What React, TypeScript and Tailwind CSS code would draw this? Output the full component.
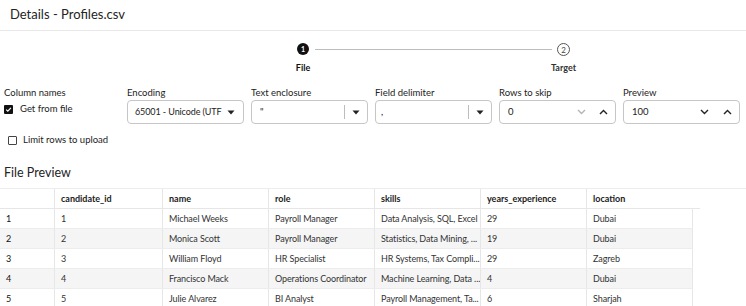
import React from "react";

const rows = [
  ["1", "1", "Michael Weeks", "Payroll Manager", "Data Analysis, SQL, Excel", "29", "Dubai"],
  ["2", "2", "Monica Scott", "Payroll Manager", "Statistics, Data Mining, ...", "19", "Dubai"],
  ["3", "3", "William Floyd", "HR Specialist", "HR Systems, Tax Compli...", "29", "Zagreb"],
  ["4", "4", "Francisco Mack", "Operations Coordinator", "Machine Learning, Data ...", "4", "Dubai"],
  ["5", "5", "Julie Alvarez", "BI Analyst", "Payroll Management, Ta...", "6", "Sharjah"],
];

const headers = ["", "candidate_id", "name", "role", "skills", "years_experience", "location"];
const widths = ["w-[55px]", "w-[108px]", "w-[106px]", "w-[106px]", "w-[106px]", "w-[106px]", "w-[106px]"];

function Caret() {
  return (
    <svg width="8" height="5" viewBox="0 0 8 5">
      <path d="M0.5 0.5 L7.5 0.5 L4 4.5 Z" fill="#222" />
    </svg>
  );
}

function Chevron({ up, color }: { up?: boolean; color: string }) {
  return (
    <svg width="9" height="6" viewBox="0 0 9 6">
      <path
        d={up ? "M1 5 L4.5 1.5 L8 5" : "M1 1 L4.5 4.5 L8 1"}
        fill="none"
        stroke={color}
        strokeWidth="1.4"
      />
    </svg>
  );
}

function Field({ label, children }: { label: string; children: React.ReactNode }) {
  return (
    <div className="flex flex-col w-[117px]">
      <div className="text-[9.5px] leading-[12px] text-[#222] h-[12px]">{label}</div>
      <div className="mt-[1px] h-[24px] border border-[#c6c6c6] rounded-[4px] flex items-center text-[9.5px] text-[#222] bg-white">
        {children}
      </div>
    </div>
  );
}

export default function App() {
  return (
    <div
      className="w-[746px] h-[306px] overflow-hidden bg-white text-[#1f1f1f]"
      style={{ fontFamily: 'Lato, "Noto Sans", sans-serif' }}
    >
      <div className="h-[31px] border-b border-[#e8e8e8] flex items-center pl-[10px]">
        <span className="text-[13px] text-[#242424]">Details - Profiles.csv</span>
      </div>

      <div className="flex items-start ml-[297px] mt-[12px]">
        <div className="flex flex-col items-center w-[12px]">
          <div className="w-[12px] h-[12px] rounded-full bg-[#111] flex items-center justify-center text-white text-[7px] font-bold leading-none">
            1
          </div>
          <div className="mt-[7px] flex justify-center w-[12px] whitespace-nowrap text-[9px] font-bold text-[#111] leading-[12px]">
            File
          </div>
        </div>
        <div className="h-px w-[237px] bg-[#bdbdbd] mt-[6px] ml-[6px] mr-[5px]" />
        <div className="flex flex-col items-center w-[13px]">
          <div className="w-[13px] h-[13px] rounded-full border border-[#555] flex items-center justify-center text-[#444] text-[8px] leading-none">
            2
          </div>
          <div className="mt-[6px] flex justify-center w-[13px] whitespace-nowrap text-[9px] font-bold text-[#333] leading-[12px]">
            Target
          </div>
        </div>
      </div>

      <div className="flex items-start mt-[13px] pl-[4px] gap-[7px]">
        <div className="flex flex-col w-[116px]">
          <div className="text-[9.5px] leading-[12px] text-[#222] h-[12px]">Column names</div>
          <div className="flex items-center mt-[3px] h-[15px]">
            <div className="w-[9px] h-[9px] rounded-[1px] bg-[#111] flex items-center justify-center">
              <svg width="7" height="7" viewBox="0 0 7 7">
                <path d="M1.2 3.6 L2.8 5.1 L5.9 1.8" fill="none" stroke="white" strokeWidth="1.2" />
              </svg>
            </div>
            <span className="ml-[7px] text-[9.5px] text-[#222]">Get from file</span>
          </div>
        </div>
        <Field label="Encoding">
          <span className="ml-[7px] flex-1 whitespace-nowrap text-[9px] tracking-[-0.1px]">65001 - Unicode (UTF</span>
          <span className="mr-[8px] flex"><Caret /></span>
        </Field>
        <Field label="Text enclosure">
          <span className="ml-[8px] flex-1">"</span>
          <span className="h-[14px] w-px bg-[#bdbdbd]" />
          <span className="mx-[7px] flex"><Caret /></span>
        </Field>
        <Field label="Field delimiter">
          <span className="ml-[5px] flex-1">,</span>
          <span className="h-[14px] w-px bg-[#bdbdbd]" />
          <span className="mx-[7px] flex"><Caret /></span>
        </Field>
        <Field label="Rows to skip">
          <span className="ml-[8px] flex-1">0</span>
          <span className="flex"><Chevron color="#b5b5b5" /></span>
          <span className="ml-[13px] mr-[7px] flex"><Chevron up color="#222" /></span>
        </Field>
        <div className="w-[120px]">
          <Field label="Preview">
            <span className="ml-[8px] flex-1">100</span>
            <span className="flex"><Chevron color="#222" /></span>
            <span className="ml-[14px] mr-[7px] flex"><Chevron up color="#222" /></span>
          </Field>
        </div>
      </div>

      <div className="flex items-center ml-[8px] mt-[10px] h-[12px]">
        <div className="w-[9px] h-[9px] border border-[#444] rounded-[1px]" />
        <span className="ml-[6px] text-[9.5px] text-[#222]">Limit rows to upload</span>
      </div>

      <div className="ml-[4px] mt-[18px] text-[12.5px] leading-[18px] text-[#242424]">File Preview</div>

      <div className="mt-[6px] border-t border-[#ececec]">
        <div className="flex w-[700px] h-[20px] border-b border-[#e6e6e6]">
          {headers.map((h, i) => (
            <div
              key={i}
              className={`${widths[i]} shrink-0 flex items-center px-[6px] text-[9px] font-bold text-[#222] ${i < 6 ? "border-r border-[#e6e6e6]" : ""}`}
            >
              {h}
            </div>
          ))}
        </div>
        {rows.map((r, ri) => (
          <div
            key={ri}
            className={`flex w-[693px] h-[20px] border-b border-[#ececec] ${ri % 2 === 1 ? "bg-[#f5f5f5]" : "bg-white"}`}
          >
            {r.map((c, i) => (
              <div
                key={i}
                className={`${widths[i]} shrink-0 flex items-center pl-[6px] pr-[3px] text-[9px] tracking-[-0.1px] whitespace-nowrap overflow-hidden ${i === 0 ? "text-[#111]" : "text-[#333]"} border-r border-[#e6e6e6]`}
              >
                {c}
              </div>
            ))}
          </div>
        ))}
      </div>
    </div>
  );
}
